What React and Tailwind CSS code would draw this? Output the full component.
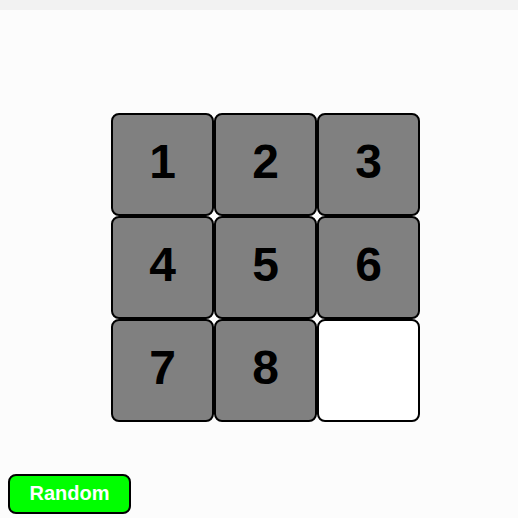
const TILES = [1, 2, 3, 4, 5, 6, 7, 8, null];

export default function App() {
  return (
    <div className="min-h-[518px] bg-[#fcfcfc] flex flex-col" style={{ fontFamily: '"Liberation Sans", Arial, sans-serif' }}>
      <div className="h-[10px] bg-[#f2f2f2]" />

      {/* Puzzle board */}
      <div className="pl-[111px] pt-[103px]">
        <div className="grid grid-cols-[repeat(3,103px)] grid-rows-[repeat(3,103px)] w-fit">
          {TILES.map((n, i) =>
            n ? (
              <div
                key={i}
                className="flex items-center justify-center pb-[6px] rounded-[8px] border-2 border-black bg-[#808080] text-[48px] font-bold text-black"
              >
                {n}
              </div>
            ) : (
              <div key={i} className="rounded-[8px] border-2 border-black bg-white" />
            )
          )}
        </div>
      </div>

      <div className="pl-[8px] pt-[52px]">
        <button className="w-[123px] h-[40px] pb-[2px] rounded-[8px] border-2 border-black bg-[#00ff00] text-white font-bold text-[20px] leading-none">
          Random
        </button>
      </div>
    </div>
  );
}
